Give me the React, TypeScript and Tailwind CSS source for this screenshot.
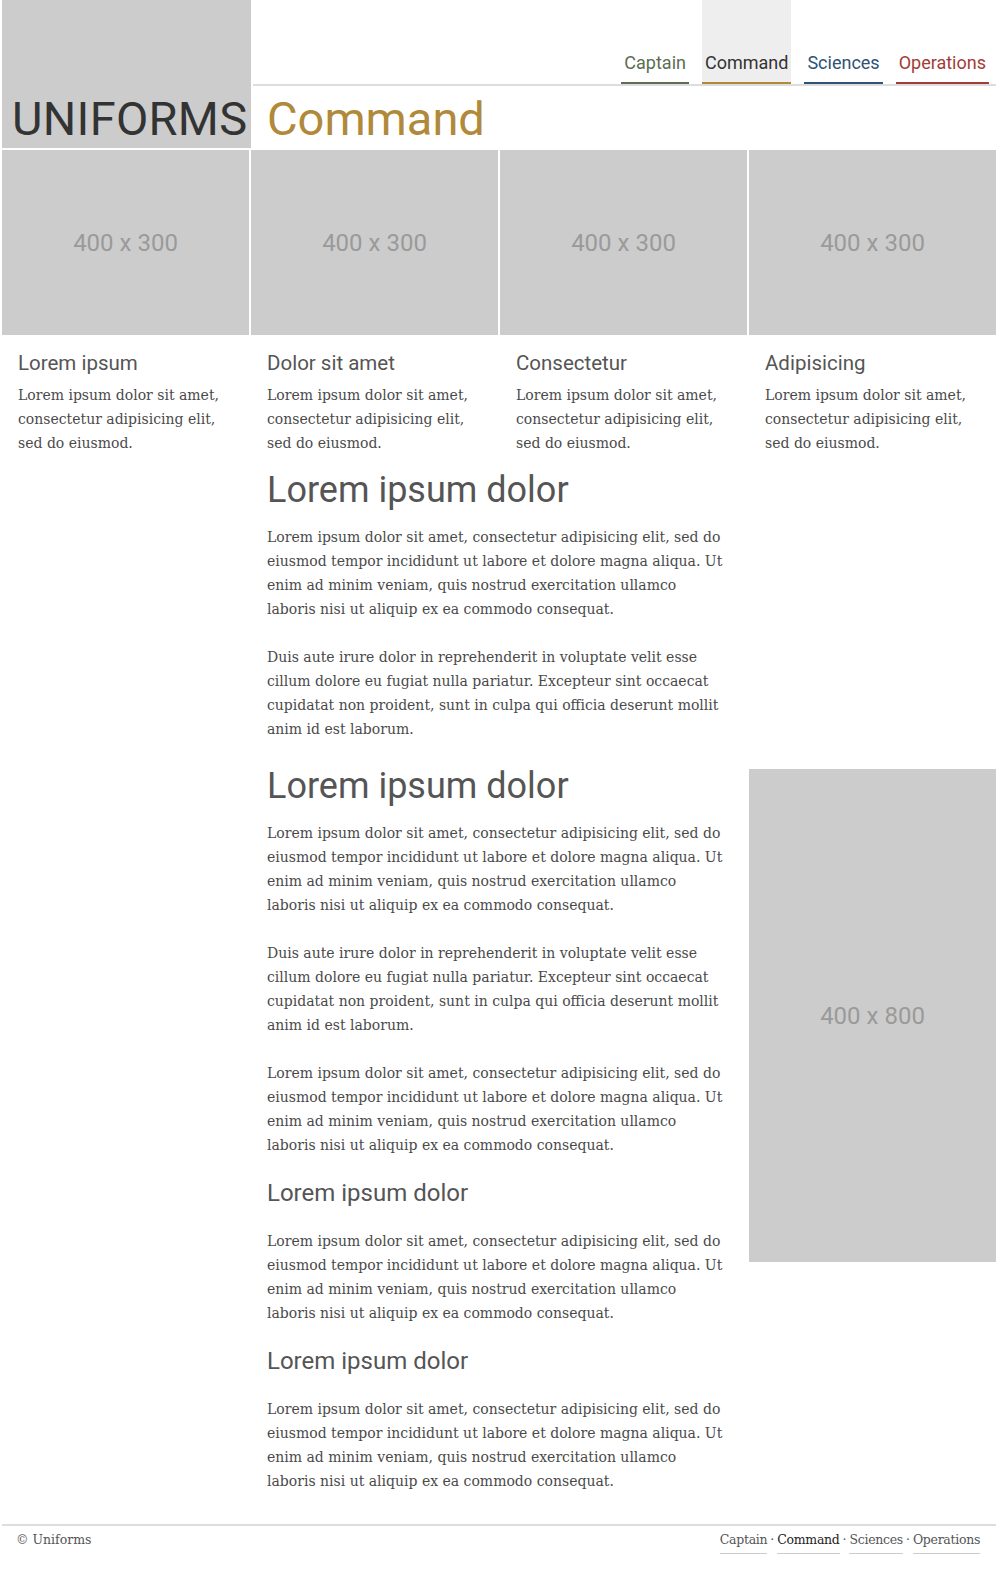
const NAV = [
  { label: 'Captain', text: 'text-[#5b6e52]', line: 'border-[#5b6e52]', active: false },
  { label: 'Command', text: 'text-[#333333]', line: 'border-[#b0893a]', active: true },
  { label: 'Sciences', text: 'text-[#2f5275]', line: 'border-[#2f5275]', active: false },
  { label: 'Operations', text: 'text-[#a13c38]', line: 'border-[#a13c38]', active: false },
];

const CARDS = ['Lorem ipsum', 'Dolor sit amet', 'Consectetur', 'Adipisicing'];

const LOREM =
  'Lorem ipsum dolor sit amet, consectetur adipisicing elit, sed do eiusmod tempor incididunt ut labore et dolore magna aliqua. Ut enim ad minim veniam, quis nostrud exercitation ullamco laboris nisi ut aliquip ex ea commodo consequat.';
const DUIS =
  'Duis aute irure dolor in reprehenderit in voluptate velit esse cillum dolore eu fugiat nulla pariatur. Excepteur sint occaecat cupidatat non proident, sunt in culpa qui officia deserunt mollit anim id est laborum.';

const sans = "font-['Roboto','Liberation_Sans',sans-serif]";
const serif = "font-['DejaVu_Serif','Liberation_Serif',serif]";

function Placeholder({ label, className }: { label: string; className: string }) {
  return (
    <div
      className={`bg-[#cccccc] flex items-center justify-center text-[24px] text-[#9a9a9a] ${sans} ${className}`}
    >
      {label}
    </div>
  );
}

function Para({ children, className = '' }: { children: React.ReactNode; className?: string }) {
  return (
    <p className={`${serif} text-[14px] leading-[24px] text-[#4a4a4a] ${className}`}>{children}</p>
  );
}

export default function App() {
  return (
    <div className="bg-white min-h-screen">
      <div className="w-[994px] ml-[2px]">
        {/* header */}
        <header className="flex">
          <div className="w-[249px] h-[148px] bg-[#cccccc] flex items-end pl-[10px] pb-[6px]">
            <span className={`${sans} text-[47px] leading-none text-[#333333] tracking-[0.3px]`}>
              UNIFORMS
            </span>
          </div>
          <div className="flex-1 ml-[2px] flex flex-col">
            <nav className="h-[86px] flex justify-end items-stretch gap-[13px] pr-[7px] border-b-2 border-[#dddddd]">
              {NAV.map((n) => (
                <a
                  key={n.label}
                  className={`${sans} text-[18px] px-[3px] flex items-end pb-[6px] border-b-2 ${n.line} ${n.text} ${
                    n.active ? 'bg-[#eeeeee]' : ''
                  }`}
                >
                  {n.label}
                </a>
              ))}
            </nav>
            <h1 className={`${sans} text-[47px] leading-none text-[#b0893a] pl-[14px] pt-[9px]`}>
              Command
            </h1>
          </div>
        </header>

        {/* cards */}
        <section className="grid grid-cols-4 gap-[2px] mt-[2px]">
          {CARDS.map((c) => (
            <div key={c}>
              <Placeholder label="400 x 300" className="h-[185px]" />
              <div className="px-4 pt-[14px]">
                <h3 className={`${sans} text-[20.5px] leading-[28px] text-[#555555]`}>{c}</h3>
                <Para className="mt-[6px]">
                  Lorem ipsum dolor sit amet, consectetur adipisicing elit, sed do eiusmod.
                </Para>
              </div>
            </div>
          ))}
        </section>

        {/* article section 1 */}
        <section className="grid grid-cols-4 gap-[2px] mt-[12px]">
          <div className="col-start-2 col-span-2 pl-4 pr-[22px]">
            <h2 className={`${sans} text-[36px] leading-[46px] text-[#555555]`}>Lorem ipsum dolor</h2>
            <Para className="mt-[12px]">{LOREM}</Para>
            <Para className="mt-6">{DUIS}</Para>
          </div>
        </section>

        {/* article section 2 */}
        <section className="grid grid-cols-4 gap-[2px] mt-[22px]">
          <div className="col-start-2 col-span-2 pl-4 pr-[22px]">
            <h2 className={`${sans} text-[36px] leading-[46px] text-[#555555]`}>Lorem ipsum dolor</h2>
            <Para className="mt-[12px]">{LOREM}</Para>
            <Para className="mt-6">{DUIS}</Para>
            <Para className="mt-6">{LOREM}</Para>
            <h3 className={`${sans} text-[24px] leading-[32px] text-[#555555] mt-[20px]`}>
              Lorem ipsum dolor
            </h3>
            <Para className="mt-[20px]">{LOREM}</Para>
            <h3 className={`${sans} text-[24px] leading-[32px] text-[#555555] mt-[20px]`}>
              Lorem ipsum dolor
            </h3>
            <Para className="mt-[20px]">{LOREM}</Para>
          </div>
          <div className="col-start-4 mt-[6px]">
            <Placeholder label="400 x 800" className="h-[493px]" />
          </div>
        </section>

        {/* footer */}
        <footer
          className={`mt-[31px] border-t-2 border-[#dddddd] flex justify-between items-start px-[14px] pt-[5px] pb-[14px] ${serif} text-[12.5px] text-[#555555]`}
        >
          <span>© Uniforms</span>
          <span className="flex gap-[3px] pr-[2px]">
            <a className="border-b border-[#cccccc] pb-[3px] tracking-[-0.3px]">Captain</a>
            <span>·</span>
            <a className="border-b border-[#cccccc] pb-[3px] tracking-[-0.3px] text-[#222222]">Command</a>
            <span>·</span>
            <a className="border-b border-[#cccccc] pb-[3px] tracking-[-0.3px]">Sciences</a>
            <span>·</span>
            <a className="border-b border-[#cccccc] pb-[3px] tracking-[-0.3px]">Operations</a>
          </span>
        </footer>
      </div>
    </div>
  );
}
